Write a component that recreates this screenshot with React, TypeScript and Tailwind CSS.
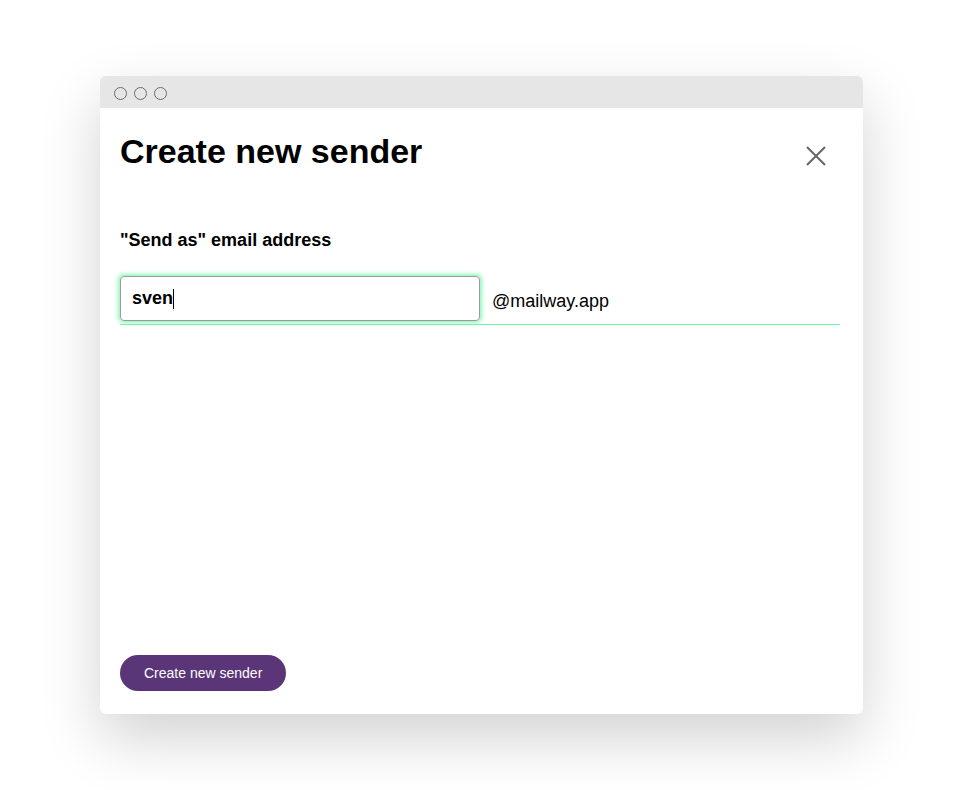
import React from 'react';

const App: React.FC = () => {
  return (
    <div className="min-h-screen bg-white pt-[76px] px-[100px] font-['Liberation_Sans',Arial,sans-serif]">
      <div className="w-[763px] h-[638px] rounded-md bg-white shadow-[0_24px_60px_rgba(0,0,0,0.18)] flex flex-col overflow-hidden">
        <div className="h-8 bg-[#e6e6e6] flex items-center gap-[7px] pl-[14px] pt-[2px]">
          <span className="w-[13px] h-[13px] rounded-full border border-[#6b6b6b]" />
          <span className="w-[13px] h-[13px] rounded-full border border-[#6b6b6b]" />
          <span className="w-[13px] h-[13px] rounded-full border border-[#6b6b6b]" />
        </div>

        <div className="flex-1 flex flex-col px-5 pb-[23px]">
          <div className="flex items-start justify-between pt-[22px]">
            <h1 className="text-[34px] leading-[42px] font-bold text-black">Create new sender</h1>
            <button className="mt-[16px] mr-[17px]" aria-label="Close">
              <svg width="20" height="20" viewBox="0 0 20 20" fill="none">
                <path d="M1 1L19 19M19 1L1 19" stroke="#666" strokeWidth="2" />
              </svg>
            </button>
          </div>

          <label className="mt-[56px] text-[18px] leading-[24px] font-bold text-black">
            "Send as" email address
          </label>

          <div className="mt-[24px] w-[720px] flex items-center border-b border-[#6ff2a9] pb-[3px]">
            <div className="w-[360px] h-[45px] rounded-[4px] border border-[#9a9a9a] shadow-[0_0_4px_2px_#8ff5bc] flex items-center px-[11px]">
              <span className="text-[18px] font-bold text-black">sven</span>
              <span className="w-px h-[20px] bg-black" />
            </div>
            <span className="ml-3 text-[18px] text-black pt-[5px]">@mailway.app</span>
          </div>

          <div className="flex-1" />

          <div>
            <button className="h-9 px-6 rounded-full bg-[#5a3577] text-white text-[14px]">
              Create new sender
            </button>
          </div>
        </div>
      </div>
    </div>
  );
};

export default App;
